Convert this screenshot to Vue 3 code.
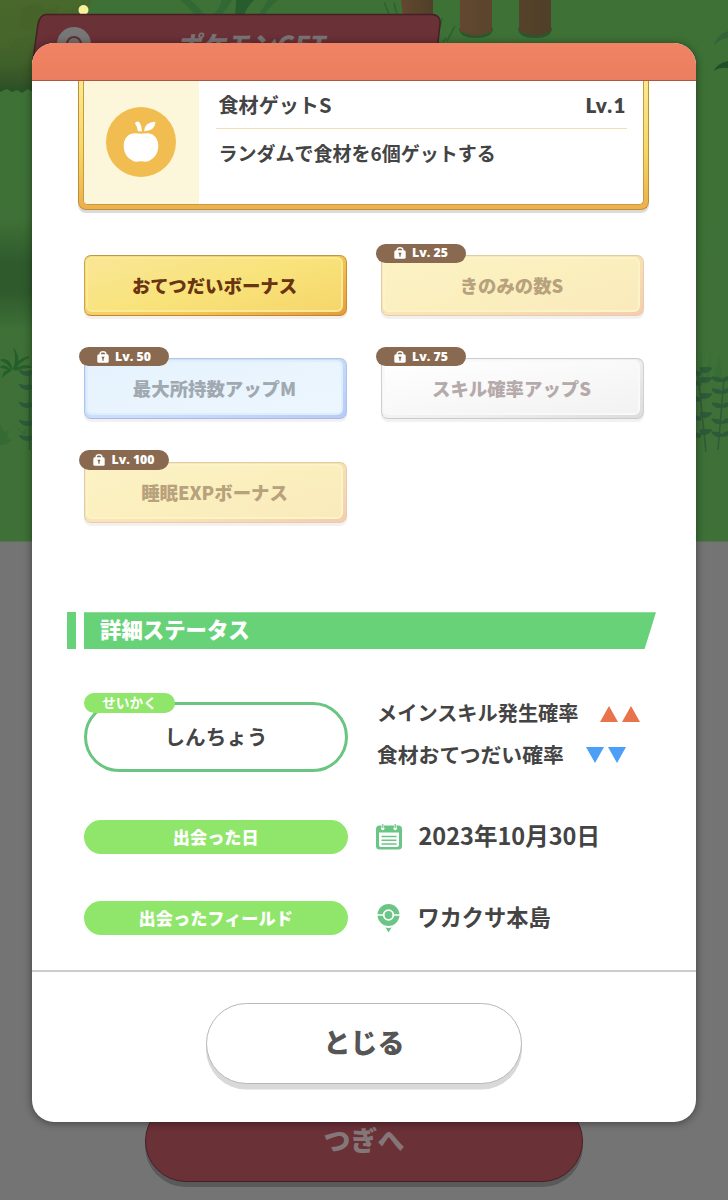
<template>
  <div class="screen">
    <svg class="scene" viewBox="0 0 728 1200" aria-hidden="true">
      <defs>
        <linearGradient id="field" x1="0" y1="0" x2="0" y2="1">
          <stop offset="0" stop-color="#3e7136" />
          <stop offset="1" stop-color="#3e7037" />
        </linearGradient>
        <linearGradient id="shade" x1="0" y1="0" x2="0" y2="1">
          <stop offset="0" stop-color="#2f5a2c" stop-opacity="0" />
          <stop offset="0.4" stop-color="#2f5a2c" />
          <stop offset="0.65" stop-color="#2f5a2c" />
          <stop offset="1" stop-color="#2f5a2c" stop-opacity="0" />
        </linearGradient>
        <linearGradient id="bush" x1="0" y1="0" x2="0" y2="1">
          <stop offset="0" stop-color="#46682c" />
          <stop offset="0.65" stop-color="#41612a" />
          <stop offset="0.85" stop-color="#365528" />
          <stop offset="1" stop-color="#245024" />
        </linearGradient>
        <linearGradient id="trunk" x1="0" y1="0" x2="1" y2="0">
          <stop offset="0" stop-color="#63472f" />
          <stop offset="0.5" stop-color="#57442b" />
          <stop offset="1" stop-color="#503f29" />
        </linearGradient>
      </defs>
      <rect width="728" height="1200" fill="#747474" />
      <rect width="728" height="541.500" fill="url(#field)" />
      <rect y="220" width="40" height="110" fill="url(#shade)" />

      <!-- bush in the corner -->
      <path d="M0 0H92L88 12L82 16L78 30L62 36L52 50L40 62L36 94L28 89L22 93L17 90L12 92L7 89L0 92Z" fill="url(#bush)" />
      <path d="M0 0H84L76 9L60 12L52 24L38 24L30 36L16 38L10 48L0 50Z" fill="#4a692d" opacity="0.4" />
      <path d="M22 8l14-5 10 7 14-4-6 12-14 3-10 10-12-4z" fill="#466027" opacity="0.4" />

      <!-- grass and trunks -->
      <g fill="#316834">
        <path d="M196 16Q188 6 180 0H190Q200 8 206 16Z" />
        <path d="M212 16Q220 8 222 0H232Q228 8 220 16Z" />
        <path d="M235 16Q236 6 236 0H254Q246 8 244 16Z" fill="#275d2d" />
        <path d="M258 16Q264 6 268 0H278Q268 8 264 16Z" />
      </g>
      <path d="M401 0h32v34q-14 10-28 0z" fill="url(#trunk)" />
      <path d="M459 28h34q0 10-17 10t-17-10M518 28h34q0 10-17 10t-17-10" fill="#28592b" />
      <path d="M460 0h32v31q-16 9-32 0zM519 0h32v31q-16 9-32 0z" fill="url(#trunk)" />
      <path d="M384 2l5 12M394 3l3 11M442 18l-4 17M455 26l-8 15M446 38l-3 4" stroke="#2b6330" stroke-width="1.6" />

      <!-- plants along the edges -->
      <path d="M714 46q3-12 14-15v7q-8 0-14 8" fill="#34633a" />
      <path d="M714 71q2-7 14-10v7q-9-1-14 3" fill="#1f5128" />
      <g fill="#235f2a">
        <path d="M13 347q8 8 4 22l-4 1q4-12 0-23" />
        <path d="M12 370q-2-12-11-10q7 2 11 10M14 369q5-11 15-12q-8 3-15 12M11 371q-6-7-10-4q6 1 10 4M15 370q8-6 16-3q-8 0-16 3M10 371q-6-1-7 5q4-4 7-5" stroke="#235f2a" stroke-width="1.4" />
      </g>
      <path d="M0 424l4 8 5-2-2 8 5 2-7 5H0zM14 424l8 8 5-4-2 9z" fill="#346b35" />
      <g fill="#2d5a38" stroke="#2d5a38">
        <path d="M29.500 370V450" fill="none" stroke-width="1.500" />
        <path v-for="y in [371, 385, 403, 421, 436]" :key="y" :d="`M19 ${y - 1}q5 3 12 1v4q-9 2-12-5`" />
      </g>
      <path d="M697 380l4-28 3 30M704 383l7-32-2 33M713 380l6-25 4 27z" fill="#376e37" />
      <g fill="#2d5a38" stroke="#2d5a38">
        <path d="M698 375L706 452M724 378L718 450" fill="none" stroke-width="1.500" />
        <path v-for="y in [372, 382, 398, 417, 434]" :key="y" :d="`M700 ${y}q8 2 12-4q-9-1-12 0M701 ${y + 3}q-7 1-9-4q8-1 9 4`" />
        <path v-for="y in [381, 393, 407, 423, 436]" :key="y" :d="`M723 ${y}q-9 2-11-4q9 0 11 4M722 ${y}q6 1 9-4q-8-1-9 4`" />
      </g>

      <circle cx="83.500" cy="10" r="5" fill="#f8f09a" />

      <!-- ribbon behind the dialog -->
      <path d="M46 14.500H432Q441 15 440 24L436 60H33L38 24Q40 15 46 14.500Z" fill="#6a3137" stroke="#471f25" stroke-width="1.500" />
      <circle cx="74" cy="44" r="17" fill="#777" />
      <circle cx="74" cy="44" r="7" fill="#747071" stroke="#5d3136" stroke-width="2" />
    </svg>

    <span class="ribbon-title">ポケモンGET</span>
    <div class="next">つぎへ</div>

    <main class="dialog">
      <header class="dialog-head"></header>
      <section class="content">
        <div class="skill-card">
          <div class="skill-body">
            <div class="skill-icon">
              <svg width="70" height="70" viewBox="0 0 70 70">
                <circle cx="35" cy="35" r="35" fill="#f1bd51" />
                <path d="M35 26.800C37 26.500 39.500 26 42 26.200C48.500 27 52.300 32 52.300 38.500C52.300 45.500 49.500 50 44.500 53Q41.500 55.300 38 54.500Q35 54 32 54.500Q28.500 55.300 25.500 53C20.500 50 17.700 45.500 17.700 38.500C17.700 32 21.500 27 28 26.200C30.500 26 33 26.500 35 26.800Z" fill="#fff" />
                <path d="M29 16.500Q30 13.500 33.300 15Q36 19 36 24.300H32Q31.800 20.500 29 16.500Z" fill="#fff" />
                <path d="M38 24.300Q38.500 15 49.500 14.800Q49 24 38 24.300Z" fill="#fff" />
              </svg>
            </div>
            <div class="skill-text">
              <div class="skill-title"><span>食材ゲットS</span><span class="level">Lv.1</span></div>
              <p class="skill-desc">ランダムで食材を6個ゲットする</p>
            </div>
          </div>
        </div>

        <div class="subskills">
          <div v-for="s in subskills" :key="s.name" class="subskill" :class="[s.kind, { locked: s.level }]">
            <div class="face">{{ s.name }}</div>
            <div v-if="s.level" class="tag">
              <svg width="12" height="12" viewBox="0 0 12 12">
                <path d="M3.200 4V2.800Q3.200 0.800 6 0.800T8.800 2.800V4" fill="none" stroke="#fff" stroke-width="1.400" />
                <rect x="0.300" y="3.300" width="11.400" height="8.500" rx="1.600" fill="#fff" />
                <path d="M4.400 5.800h3.200L6.600 7.800V9.800H5.400V7.800z" fill="#7d6048" />
              </svg>
              <span>Lv. {{ s.level }}</span>
            </div>
          </div>
        </div>

        <div class="heading">
          <i class="heading-mark"></i>
          <h2>詳細ステータス</h2>
        </div>

        <div class="nature-row">
          <div class="nature">
            <span class="nature-tag">せいかく</span>
            しんちょう
          </div>
          <div class="effects">
            <div class="effect up">
              <span>メインスキル発生確率</span>
              <svg width="40" height="16" viewBox="0 0 40 16"><path d="M0 16L9 0L18 16ZM22 16L31 0L40 16Z" fill="#e9734a" /></svg>
            </div>
            <div class="effect down">
              <span>食材おてつだい確率</span>
              <svg width="40" height="16" viewBox="0 0 40 16"><path d="M0 0H18L9 16ZM22 0H40L31 16Z" fill="#4b9ff6" /></svg>
            </div>
          </div>
        </div>

        <div class="info first">
          <span class="info-label">出会った日</span>
          <svg width="28" height="30" viewBox="0 0 28 30">
            <path d="M4.500 3.500H23.500Q27 3.500 27 7V24Q27 27.500 23.500 27.500H4.500Q1 27.500 1 24V7Q1 3.500 4.500 3.500Z" fill="#6bc585" />
            <path d="M4 10.500H24V23Q24 25 22 25H6Q4 25 4 23Z" fill="#fff" />
            <circle cx="7.800" cy="6.500" r="1.700" fill="#fff" />
            <circle cx="20.200" cy="6.500" r="1.700" fill="#fff" />
            <path d="M7.800 2.500V6.500M20.200 2.500V6.500" stroke="#fff" stroke-width="2.400" />
            <path d="M7.800 2V6M20.200 2V6" stroke="#6bc585" stroke-width="1.200" />
            <path d="M6.500 14.500H21.500M6.500 18.300H21.500M6.500 22H21.500" stroke="#6bc585" stroke-width="1.500" />
          </svg>
          <span class="info-value date">2023年10月30日</span>
        </div>
        <div class="info">
          <span class="info-label">出会ったフィールド</span>
          <svg width="28" height="30" viewBox="0 0 28 30">
            <circle cx="13.500" cy="12" r="11" fill="#6bc585" />
            <path d="M2 12H25" stroke="#fff" stroke-width="1.500" />
            <circle cx="13.500" cy="12" r="4.800" fill="#6bc585" stroke="#fff" stroke-width="1.800" />
            <path d="M10.500 24.500Q13.500 25.300 16.500 24.500L13.500 29.500Z" fill="#6bc585" />
          </svg>
          <span class="info-value">ワカクサ本島</span>
        </div>
      </section>
      <footer class="dialog-foot">
        <button type="button" class="close">とじる</button>
      </footer>
    </main>
  </div>
</template>

<script setup>
const subskills = [
  { name: 'おてつだいボーナス', kind: 'gold' },
  { name: 'きのみの数S', kind: 'gold', level: 25 },
  { name: '最大所持数アップM', kind: 'blue', level: 50 },
  { name: 'スキル確率アップS', kind: 'white', level: 75 },
  { name: '睡眠EXPボーナス', kind: 'gold', level: 100 },
];
</script>

<style>
body {
  margin: 0;
}
</style>

<style scoped>
.screen {
  position: relative;
  width: 728px;
  height: 1200px;
  box-sizing: border-box;
  padding: 42.5px 32px 0;
  overflow: hidden;
  font-family: 'Noto Sans CJK JP', sans-serif;
  font-weight: 700;
  color: #444;
}

.screen * {
  box-sizing: border-box;
}

.scene {
  position: absolute;
  inset: 0;
  width: 728px;
  height: 1200px;
}

.ribbon-title {
  position: absolute;
  left: 179px;
  top: 28px;
  font-size: 24.6px;
  line-height: 30px;
  font-weight: 900;
  color: #7a7475;
  transform: skewX(-12deg);
  white-space: nowrap;
}

.next {
  position: absolute;
  left: 145px;
  top: 1100px;
  width: 438px;
  height: 82px;
  border: 1.5px solid #471f25;
  border-radius: 41px;
  background: #6a3137;
  box-shadow: 0 5px 0 #5a5a5a;
  color: #857779;
  font-size: 27px;
  font-weight: 900;
  line-height: 78px;
  text-align: center;
}

.dialog {
  position: relative;
  display: flex;
  flex-direction: column;
  height: 1079.5px;
  border-radius: 22px;
  background: #fff;
  overflow: hidden;
  box-shadow: 0 1px 8px rgba(0, 0, 0, 0.45);
}

.dialog-head {
  flex: none;
  height: 38px;
  background: linear-gradient(#ef8363, #eb7e60);
  border-bottom: 1.5px solid #a95643;
}

.content {
  height: 889.5px;
  overflow: hidden;
}

.skill-card {
  width: 571px;
  height: 129.5px;
  margin-left: 46px;
  padding: 0 4px 4px;
  border: 1px solid #ba8f3d;
  border-top: 0;
  border-radius: 0 0 8px 8px;
  background: linear-gradient(#fbe98c, #f5d765 55%, #eeb24d 96%);
  box-shadow: 0 3px 1px #dcdad7;
}

.skill-body {
  display: flex;
  height: 124.5px;
  border: 1px solid #c79945;
  border-top: 0;
  border-radius: 0 0 5px 5px;
  background: #fff;
  overflow: hidden;
}

.skill-icon {
  width: 114.5px;
  padding: 26px 0 0 22px;
  background: #fcf7da;
}

.skill-icon svg {
  display: block;
}

.skill-text {
  width: 411px;
  margin-left: 17px;
}

.skill-title {
  display: flex;
  justify-content: space-between;
  height: 48px;
  padding: 9px 0 0 3px;
  border-bottom: 1.5px solid #f2dfb4;
  font-size: 20.1px;
  line-height: 30px;
}

.level {
  font-family: Lato, sans-serif;
  font-size: 20.5px;
  font-weight: 800;
  letter-spacing: 1.2px;
}

.skill-desc {
  margin: 9px 0 0 3px;
  font-size: 19px;
  line-height: 30px;
}

.subskills {
  display: grid;
  grid-template-columns: 263px 263px;
  grid-auto-rows: 61px;
  gap: 42.4px 34px;
  margin: 45px 0 0 52px;
}

.subskill {
  position: relative;
  padding: 1px 3px 3px 1px;
  border: 1px solid #ba963c;
  border-radius: 7px;
}

.face {
  height: 100%;
  padding: 1px 0 0;
  border: 2px solid #fbea95;
  border-radius: 6px;
  font-size: 18.4px;
  font-weight: 900;
  line-height: 50px;
  text-align: center;
}

.gold {
  background: linear-gradient(160deg, #f8e08a, #f3c954 60%, #e69b3c);
  border-color: #bd9a47 #cf8b30 #c48333 #c8a54b;
  box-shadow: 0 3px 1px #f6efeb;
  color: #693411;
}

.gold .face {
  background: linear-gradient(165deg, #f9e696, #f8e37b 50%, #f6d66b);
}

.gold.locked {
  background: linear-gradient(160deg, #faecc0, #f8e2b0 60%, #f4cdaf);
  border-color: #dbcda6 #ebcbb0 #ecc9b0 #dfcda9;
  box-shadow: 0 3px 1px #f2f1f0;
  color: #b7a27d;
}

.gold.locked .face {
  background: linear-gradient(165deg, #fcf2c4, #fbefbe 50%, #faeabb);
  border-color: #fdf3c9;
}

.blue {
  background: linear-gradient(160deg, #d3e5fd, #c5dcfc 60%, #b8cbf5);
  border-color: #b3c6df #afc1ec #a8b9e8 #b0c4e8;
  box-shadow: 0 3px 1px #f1f1f1;
  color: #a0a8b0;
}

.blue .face {
  background: linear-gradient(165deg, #e5f2fd, #edf6fe);
  border-color: #ddeefe;
}

.white {
  background: linear-gradient(160deg, #fafafa, #eee 60%, #dcdcdc);
  border-color: #cdcdcd #d0d0d0 #cacaca #cfcfcf;
  box-shadow: 0 3px 1px #f1f1f1;
  color: #b5aaaa;
}

.white .face {
  background: linear-gradient(170deg, #fff, #f2f2f2);
  border-color: #f9f9f9;
}

.tag {
  position: absolute;
  left: -6px;
  top: -12.5px;
  display: flex;
  align-items: center;
  justify-content: center;
  gap: 6px;
  width: 90px;
  height: 19.5px;
  border-radius: 10px;
  background: #896a50;
  color: #fff;
  font-family: 'Open Sans', sans-serif;
  font-size: 12.3px;
  font-weight: 800;
  line-height: 20px;
}

.heading {
  display: flex;
  gap: 8px;
  height: 37px;
  margin: 89.5px 0 0 35px;
}

.heading-mark {
  width: 9px;
  background: #67d277;
}

.heading h2 {
  width: 572px;
  margin: 0;
  padding-left: 16px;
  background: #67d277;
  clip-path: polygon(0 0, 100% 0, calc(100% - 11.5px) 100%, 0 100%);
  color: #fff;
  font-size: 21.4px;
  font-weight: 900;
  line-height: 34px;
}

.nature-row {
  display: flex;
  height: 70px;
  margin: 53px 0 0 52px;
}

.nature {
  position: relative;
  width: 264px;
  height: 70px;
  border: 3px solid #69c581;
  border-radius: 35px;
  font-size: 20.6px;
  line-height: 62px;
  text-align: center;
}

.nature-tag {
  position: absolute;
  left: -3px;
  top: -12px;
  width: 91px;
  height: 19.5px;
  border-radius: 10px;
  background: #8fe66a;
  color: #fff;
  font-size: 13.8px;
  line-height: 19px;
}

.effects {
  margin: -6px 0 0 29px;
}

.effect {
  display: flex;
  align-items: center;
  height: 41px;
  line-height: 30px;
  margin-top: -3px;
}

.effect span {
  margin-top: -2px;
}

.effect + .effect {
  margin-top: 0;
}

.up {
  gap: 22px;
  font-size: 20.2px;
}

.down {
  gap: 22px;
  font-size: 20.8px;
}

.info {
  display: flex;
  align-items: center;
  height: 34px;
  margin: 47px 0 0 52px;
}

.info.first {
  margin-top: 48px;
}

.info-label {
  width: 263.5px;
  height: 34px;
  margin-right: 27px;
  border-radius: 17px;
  background: #8fe66a;
  color: #fff;
  font-size: 17.2px;
  font-weight: 900;
  line-height: 33px;
  text-align: center;
}

.info-value {
  margin: -4px 0 0 15px;
  font-size: 22.2px;
  line-height: 34px;
}

.date {
  margin-left: 16px;
  font-size: 23.5px;
}

.dialog-foot {
  flex: 1;
  display: flex;
  justify-content: center;
  align-items: flex-start;
  padding-top: 30.5px;
  border-top: 2px solid #ccc;
}

.close {
  width: 316px;
  height: 81px;
  padding: 0 0 3px;
  border: 1.5px solid #b7b7b7;
  border-radius: 41px;
  background: #fff;
  box-shadow: 0 5.5px 0 #d9d9d9;
  color: #555;
  font-family: inherit;
  font-size: 27px;
  font-weight: 900;
}
</style>
